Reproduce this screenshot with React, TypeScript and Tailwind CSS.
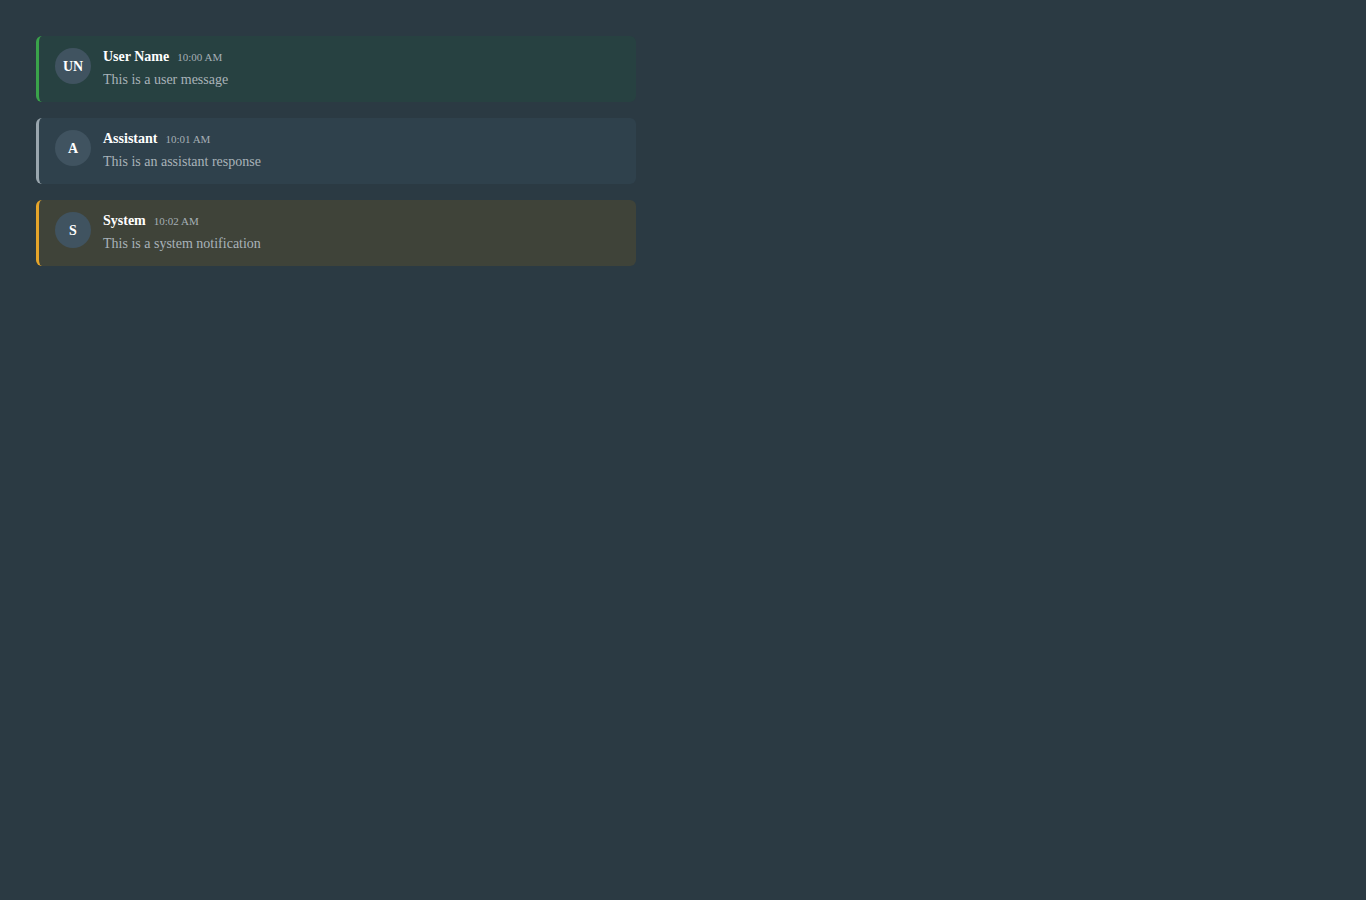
import React from "react";

const msgs = [
  { initials: "UN", name: "User Name", time: "10:00 AM", text: "This is a user message", card: "bg-[#274141] border-[#3aa34a]" },
  { initials: "A", name: "Assistant", time: "10:01 AM", text: "This is an assistant response", card: "bg-[#2f414c] border-[#9aa6ae]" },
  { initials: "S", name: "System", time: "10:02 AM", text: "This is a system notification", card: "bg-[#3f4339] border-[#e6a52a]" },
];

export default function App() {
  return (
    <div className="min-h-[900px] w-full bg-[#2b3a43] p-9" style={{ fontFamily: '"Liberation Serif", "Times New Roman", serif' }}>
      <div className="flex w-[600px] flex-col gap-4">
        {msgs.map((m) => (
          <div key={m.name} className={`flex items-start gap-3 rounded-md border-l-[3px] px-4 py-3 ${m.card}`}>
            <div className="flex h-9 w-9 shrink-0 items-center justify-center rounded-full bg-[#405360] text-[14px] font-bold text-white">
              {m.initials}
            </div>
            <div className="flex flex-col">
              <div className="flex items-center gap-2 leading-[18px]">
                <span className="text-[14px] font-bold text-white">{m.name}</span>
                <span className="text-[11px] text-[#a5afb5]">{m.time}</span>
              </div>
              <div className="mt-[4px] text-[14px] leading-[20px] text-[#a9b3b9]">{m.text}</div>
            </div>
          </div>
        ))}
      </div>
    </div>
  );
}
